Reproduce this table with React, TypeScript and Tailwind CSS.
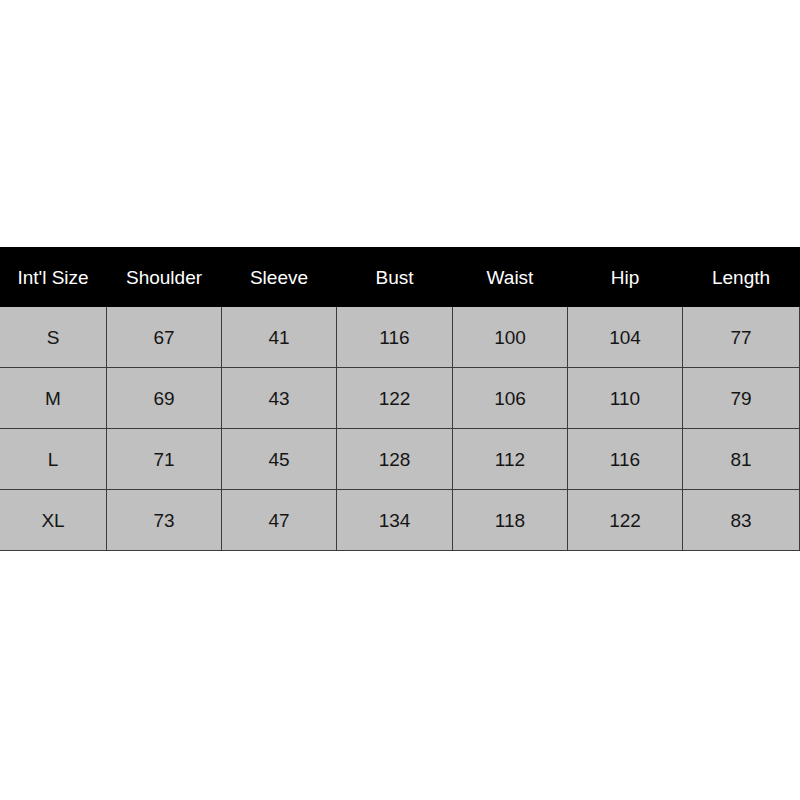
const headers = ["Int'l Size", "Shoulder", "Sleeve", "Bust", "Waist", "Hip", "Length"];

const rows = [
  ["S", "67", "41", "116", "100", "104", "77"],
  ["M", "69", "43", "122", "106", "110", "79"],
  ["L", "71", "45", "128", "112", "116", "81"],
  ["XL", "73", "47", "134", "118", "122", "83"],
];

const cols = "grid grid-cols-[106px_114px_114px_115px_114px_114px_116px] gap-x-px";

const App = () => {
  return (
    <div className="w-[800px] h-[800px] bg-white pt-[247px] font-['Liberation_Sans',Arial,sans-serif] text-[19px]">
      {/** header row */}
      <div className={`${cols} bg-black h-[60px] pr-px`}>
        {headers.map((h) => (
          <div key={h} className="flex items-center justify-center pt-[2px] text-white">
            {h}
          </div>
        ))}
      </div>
      {/** size rows */}
      <div className={`${cols} gap-y-px grid-rows-[60px_60px_60px_60px] bg-[#3c3c3c] pr-px pb-px`}>
        {rows.map((r) =>
          r.map((v, i) => (
            <div key={r[0] + i} className="flex items-center justify-center pt-[3px] bg-[#c0c0c0] text-[#151515]">
              {v}
            </div>
          ))
        )}
      </div>
    </div>
  );
};

export default App;
